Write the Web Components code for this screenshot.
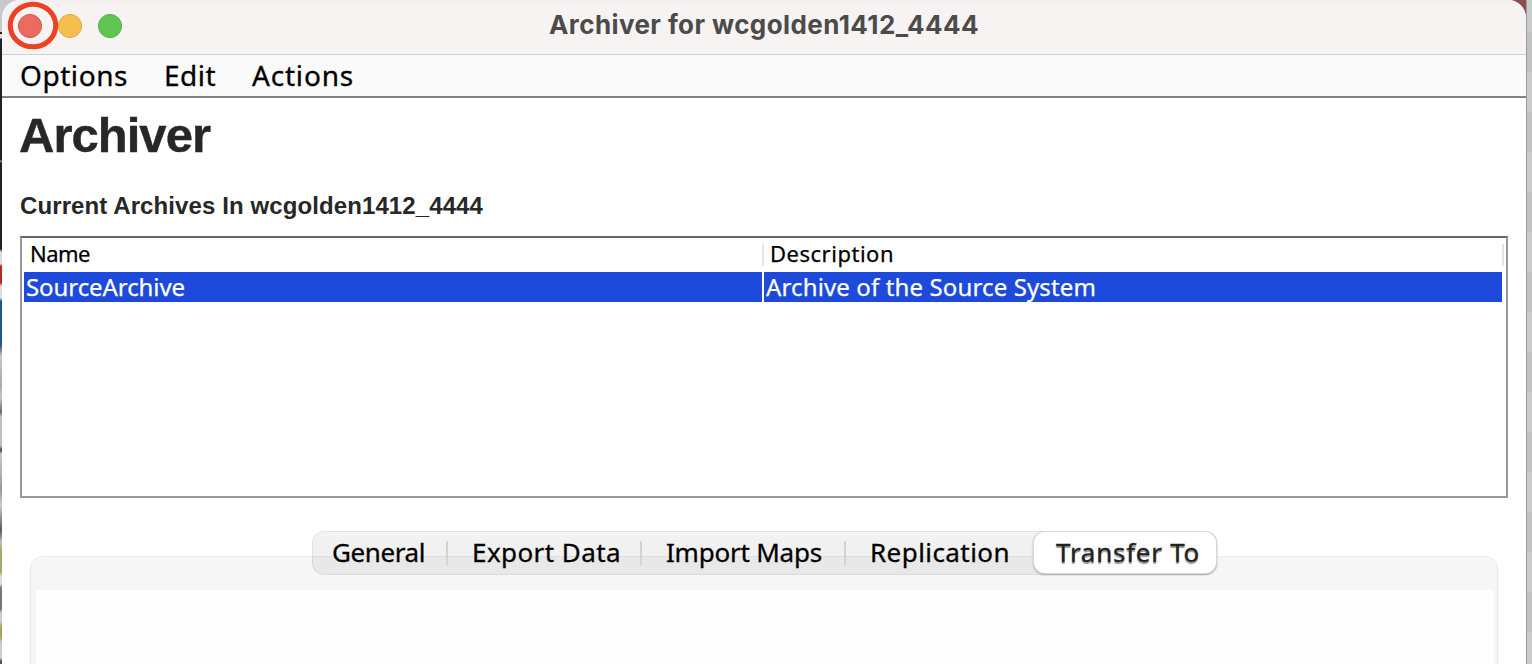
<!DOCTYPE html>
<html lang="en">
<head>
<meta charset="utf-8">
<title>Archiver for wcgolden1412_4444</title>
<style>
html,body{margin:0;height:100%;overflow:hidden;background:#fff}
</style>
</head>
<body>
<archiver-desktop></archiver-desktop>
<script>
const define = (name, html, ready) => {
  const t = document.createElement('template');
  t.innerHTML = html;
  customElements.define(name, class extends HTMLElement {
    constructor() {
      super();
      this.attachShadow({ mode: 'open' }).append(t.content.cloneNode(true));
    }
    connectedCallback() { if (ready) ready(this); }
  });
};

// A label whose tracking is spread so that it fills the width in its "w" attribute.
define('fit-label', `<style>:host{display:block;white-space:pre;flex:none;font-feature-settings:"calt" 0}span{display:inline-block}</style><span><slot></slot></span>`, el => {
  const span = el.shadowRoot.querySelector('span');
  const w = parseFloat(el.getAttribute('w'));
  el.style.width = w + 'px';
  const n = el.textContent.length;
  let spacing = 0.01;
  for (let i = 0; i < 3; i++) {
    span.style.letterSpacing = spacing + 'px';
    spacing += (w - span.getBoundingClientRect().width) / n;
  }
  span.style.letterSpacing = spacing + 'px';
});

define('window-controls', `<style>:host{display:block;width:130px;height:54px;flex:none}svg{display:block}</style>
<svg width="130" height="54" viewBox="2 0 130 54">
<circle cx="30" cy="26" r="11.6" fill="#ec6a5e" stroke="#d35349" stroke-width=".9"/>
<circle cx="70" cy="26" r="11.6" fill="#f5bf4f" stroke="#dba63c" stroke-width=".9"/>
<circle cx="110" cy="26" r="11.6" fill="#61c554" stroke="#4cab3e" stroke-width=".9"/>
<ellipse cx="33" cy="25.5" rx="22.7" ry="21.3" fill="none" stroke="#ee4023" stroke-width="5"/>
</svg>`);

define('title-bar', `<style>
:host{display:grid;grid-template-columns:130px 1fr 130px;height:54px;background:linear-gradient(#f3efee,#f7f3f2 5px);border-bottom:1px solid #d0d0d0;box-sizing:content-box}
fit-label{justify-self:center;font:700 26px/50px Inter,sans-serif;color:#4b4b4a}
</style><window-controls></window-controls><fit-label w="430">Archiver for wcgolden1412_4444</fit-label>`);
</script>
<script>
define('menu-bar', `<style>
:host{display:flex;height:41px;background:#fafafa;border-bottom:2px solid #808080;padding-left:18px;font:28px/40px "Noto Sans",sans-serif;color:#000;-webkit-text-stroke:.3px}
fit-label+fit-label{margin-left:36px}
</style><fit-label w="108">Options</fit-label><fit-label w="52">Edit</fit-label><fit-label w="102">Actions</fit-label>`);

define('archive-table', `<style>
:host{display:grid;grid-template-columns:738px 2px 738px 2px;grid-template-rows:34px 30px;box-sizing:border-box;height:262px;width:1488px;border:2px solid #999;border-top-color:#666;padding-left:2px;margin-left:18px;font-family:"Noto Sans",sans-serif;-webkit-text-stroke:.25px}
.h{font-size:22px;line-height:31px;padding-left:6px;color:#000}
.s{background:#e5e5e5;height:22px;margin-top:6px}
.r{background:#1d4ada;color:#fff;font-size:24px;line-height:29px;padding-left:2px}
</style><div class="h"><fit-label w="60">Name</fit-label></div><div class="s"></div><div class="h"><fit-label w="124">Description</fit-label></div><div class="s"></div>
<div class="r"><fit-label w="159">SourceArchive</fit-label></div><div></div><div class="r"><fit-label w="330">Archive of the Source System</fit-label></div>`);

define('tab-item', `<style>
:host{display:flex;align-items:flex-start;box-sizing:border-box;height:44px;position:relative;font:26px/43px "Noto Sans",sans-serif;color:#000;-webkit-text-stroke:.3px}
:host([divided])::after{content:"";width:2px;height:24px;margin:10px 0 0 auto;background:#d3d3d3}
:host([selected]){height:41px;background:#fff;border-radius:11px;box-shadow:0 0 0 1px #d8d8d8,0 1px 2px 1px #aaa;color:#222;line-height:40px;text-shadow:0 2px 1px #999}
</style><slot></slot>`);

define('tab-strip', `<style>
:host{display:grid;grid-template-columns:135px 194px 204px 188px 182px;box-sizing:border-box;width:905px;height:44px;margin-left:310px;border:1px solid rgba(0,0,0,.07);border-radius:12px;background:linear-gradient(rgba(0,0,0,.045),rgba(0,0,0,.055) 8px);position:relative}
tab-item{margin-top:-1px;padding-left:24px}
tab-item:first-of-type{padding-left:19px}
tab-item[selected]{margin-top:0;padding-left:22px}
</style><tab-item divided><fit-label w="93">General</fit-label></tab-item><tab-item divided><fit-label w="149">Export Data</fit-label></tab-item><tab-item divided><fit-label w="156">Import Maps</fit-label></tab-item><tab-item><fit-label w="140">Replication</fit-label></tab-item><tab-item selected><fit-label w="144">Transfer To</fit-label></tab-item>`);

define('tab-panel', `<style>
:host{display:block;box-sizing:border-box;width:1468px;height:120px;margin:-19px 0 0 28px;border:1px solid #ebebeb;border-radius:12px 12px 0 0;background:#f6f6f6;padding:33px 3px 0 5px}
div{height:100px;background:#fefefe}
</style><div></div>`);

define('archiver-window', `<style>
:host{display:block;width:1524px;height:664px;background:#fff;border-radius:18px 18px 0 0;overflow:hidden}
h1,h2{margin:0;font-family:"Liberation Sans",sans-serif;font-weight:700;color:#272727}
h1{font-size:49px;line-height:74px;height:87px;padding-left:17px;-webkit-text-stroke:.4px}
h2{font-size:24px;line-height:42px;height:51px;padding-left:18px}
tab-strip{margin-top:33px}
</style><title-bar></title-bar><menu-bar></menu-bar>
<h1><fit-label w="191">Archiver</fit-label></h1><h2><fit-label w="463">Current Archives In wcgolden1412_4444</fit-label></h2>
<archive-table></archive-table><tab-strip></tab-strip><tab-panel></tab-panel>`);

define('archiver-desktop', `<style>
:host{display:flex;width:1532px;height:664px;overflow:hidden;background:linear-gradient(90deg,#c5c8cb 50%,#8a5051 50%) 0 0/100% 20px no-repeat}
.l{width:2px;background:linear-gradient(#c6cacc 32px,#222 32px 34px,#ddd 34px 38px,#20202c 39px 160px,#999 161px,#20202c 163px 249px,#ddd 252px 264px,#b72a24 266px 283px,#ddd 286px 298px,#23558e 301px 345px,#777 349px,#c6c6cf 356px,#aaa 385px,#c5c5cf 398px,#66696d 412px,#c1c5cb 417px,#bbb 446px,#444 450px,#c7cbcd 454px,#999 490px,#c9cdcc 505px,#555b5e 530px,#bbb 542px,#a8a667 552px 572px,#ddd 576px 584px,#747681 588px 609px,#ccc 613px 622px,#a8a55f 626px 638px,#ccc 642px 658px,#555 661px)}
.r{width:6px;background:linear-gradient(90deg,#999d9b 0,#999d9b 1px,transparent 1px),repeating-linear-gradient(#cbcbcb 0 40px,#bfc2c0 40px 80px) 0 -8px}
</style><div class="l"></div><archiver-window></archiver-window><div class="r"></div>`);
</script>
</body>
</html>
